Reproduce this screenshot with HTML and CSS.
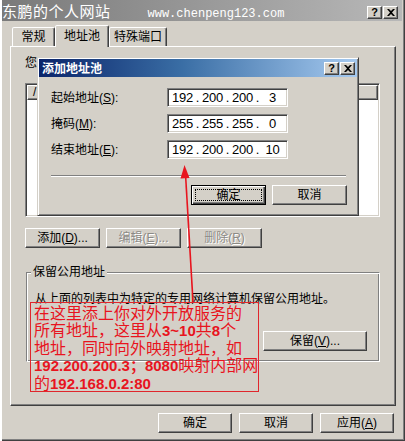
FILE: index.html
```html
<!DOCTYPE html>
<html>
<head>
<meta charset="utf-8">
<link rel="stylesheet" href="styles.css">
</head>
<body>
<div class="window">
  <div class="titlebar">
    <span class="tt-cn">东鹏的个人网站</span><span class="tt-url">www.chenpeng123.com</span>
    <div class="capbtns">
      <span class="capbtn q">?</span>
      <span class="capbtn"><svg width="8" height="7" viewBox="0 0 8 7"><path d="M0 0h2l2 2 2-2h2L5 3.5 8 7H6L4 5 2 7H0l3-3.5z" fill="#000"/></svg></span>
    </div>
  </div>

  <div class="tabs">
    <div class="tab t1">常规</div>
    <div class="tab sel">地址池</div>
    <div class="tab t3">特殊端口</div>
  </div>

  <div class="panel">
    <div class="lbl">您</div>
    <div class="list">
      <div class="lhead">
        <div class="hcell h1">/</div>
        <div class="hcell h2"></div>
        <div class="hcell h3"></div>
      </div>
    </div>
    <div class="btnrow">
      <div class="btn w75">添加(<u>D</u>)...</div>
      <div class="btn w75 dis">编辑(<u>E</u>)...</div>
      <div class="btn w75 dis">删除(<u>R</u>)</div>
    </div>
    <div class="group">
      <div class="gtitle">保留公用地址</div>
      <div class="gdesc">从上面的列表中为特定的专用网络计算机保留公用地址。</div>
      <div class="gbtns"><div class="btn w104">保留(<u>V</u>)...</div></div>
    </div>
  </div>

  <div class="footer">
    <div class="btn w74">确定</div>
    <div class="btn w74">取消</div>
    <div class="btn w74">应用(<u>A</u>)</div>
  </div>

  <div class="dialog">
    <div class="dtitle">
      <span class="dtext">添加地址池</span>
      <div class="dcap">
        <span class="capbtn q">?</span>
        <span class="capbtn"><svg width="8" height="7" viewBox="0 0 8 7"><path d="M0 0h2l2 2 2-2h2L5 3.5 8 7H6L4 5 2 7H0l3-3.5z" fill="#000"/></svg></span>
      </div>
    </div>
    <div class="dbody">
      <div class="frow">
        <span class="flabel">起始地址(<u>S</u>):</span>
        <div class="ipbox"><span class="oct">192</span><span class="dot">.</span><span class="oct">200</span><span class="dot">.</span><span class="oct">200</span><span class="dot">.</span><span class="oct">3</span></div>
      </div>
      <div class="frow">
        <span class="flabel">掩码(<u>M</u>):</span>
        <div class="ipbox"><span class="oct">255</span><span class="dot">.</span><span class="oct">255</span><span class="dot">.</span><span class="oct">255</span><span class="dot">.</span><span class="oct">0</span></div>
      </div>
      <div class="frow">
        <span class="flabel">结束地址(<u>E</u>):</span>
        <div class="ipbox"><span class="oct">192</span><span class="dot">.</span><span class="oct">200</span><span class="dot">.</span><span class="oct">200</span><span class="dot">.</span><span class="oct">10</span></div>
      </div>
      <div class="sep"></div>
      <div class="dbtns">
        <div class="btn w75 default"><span class="focus">确定</span></div>
        <div class="btn w75">取消</div>
      </div>
    </div>
  </div>

  <div class="note">在这里添上你对外开放服务的<br>所有地址，这里从<b>3~10</b>共<b>8</b>个<br>地址，同时向外映射地址，如<br><b>192.200.200.3；8080</b>映射内部网<br>的<b>192.168.0.2:80</b></div>

  <svg class="arrow" width="405" height="441" viewBox="0 0 405 441">
    <line x1="193" y1="302" x2="185.5" y2="174" stroke="#e8141e" stroke-width="1.6"/>
    <polygon points="184.5,165 189.5,178 180.5,178.5" fill="#e8141e"/>
  </svg>
</div>
</body>
</html>
```

FILE: styles.css
```css
* { box-sizing: border-box; margin: 0; padding: 0; }

html, body {
  width: 405px;
  height: 441px;
  overflow: hidden;
  background: #d4d0c8;
}

body {
  font-family: "Liberation Sans", "Noto Sans CJK SC", sans-serif;
  font-size: 12px;
  color: #000;
}

u { text-decoration: underline; text-underline-offset: 1px; }

.window {
  position: relative;
  width: 405px;
  height: 441px;
  background: #d4d0c8;
  box-shadow: inset 2px 0 #fff, inset -1px -1px #404040, inset -2px -2px #808080;
}

/* outer title bar (inactive) */
.titlebar {
  height: 21px;
  margin: 0 3px 0 2px;
  background: linear-gradient(to right, #7a7a7a, #8c8c8c 30%, #b8b8b8);
  position: relative;
  color: #fff;
  white-space: nowrap;
  overflow: hidden;
  line-height: 21px;
}
.tt-cn {
  font-family: "Noto Sans CJK SC", sans-serif;
  font-size: 15px;
  letter-spacing: 0.5px;
}
.tt-url {
  font-family: "Liberation Mono", monospace;
  font-size: 12px;
  margin-left: 37px;
}
.capbtns {
  position: absolute;
  right: 4px;
  top: 6px;
  display: flex;
}
.capbtn {
  width: 15px;
  height: 13px;
  background: #d4d0c8;
  border: 1px solid;
  border-color: #fff #404040 #404040 #fff;
  box-shadow: inset -1px -1px #808080;
  display: flex;
  align-items: center;
  justify-content: center;
  color: #000;
  font-weight: bold;
  font-size: 11px;
  line-height: 11px;
}
.capbtn.q { margin-right: 1px; }

/* tabs */
.tabs {
  display: flex;
  align-items: flex-end;
  height: 25px;
  padding-left: 12px;
  position: relative;
  z-index: 1;
}
.tab {
  height: 19px;
  border: 1px solid;
  border-bottom: none;
  border-color: #fff #404040 transparent #fff;
  border-radius: 2px 2px 0 0;
  box-shadow: inset -1px 0 #808080;
  text-align: center;
  line-height: 18px;
  font-size: 12px;
  background: #d4d0c8;
}
.t1 { width: 43px; }
.sel { width: 54px; height: 22px; margin-bottom: -1px; line-height: 20px; }
.t3 { width: 58px; }

/* tab panel */
.panel {
  margin-left: 10px;
  width: 386px;
  height: 360px;
  border: 1px solid;
  border-color: #fff #404040 #404040 #fff;
  box-shadow: inset -1px -1px #808080;
  padding-left: 14px;
}
.lbl {
  margin-top: 9px;
  height: 14px;
  line-height: 14px;
  white-space: nowrap;
}
.list {
  margin-top: 13px;
  width: 355px;
  height: 134px;
  background: #fff;
  border: 1px solid;
  border-color: #808080 #fff #fff #808080;
  box-shadow: inset 1px 1px #404040, inset -1px -1px #d4d0c8;
  padding: 1px;
}
.lhead {
  display: flex;
  height: 15px;
}
.hcell {
  background: #d4d0c8;
  border: 1px solid;
  border-color: #fff #404040 #404040 #fff;
  box-shadow: inset -1px -1px #808080;
  line-height: 12px;
  padding-left: 5px;
  font-size: 12px;
  overflow: hidden;
}
.h1 { width: 110px; }
.h2 { width: 110px; }
.h3 { flex: 1; }

.btnrow {
  margin-top: 11px;
  display: flex;
  gap: 6px;
}

.btn {
  height: 20px;
  background: #d4d0c8;
  border: 1px solid;
  border-color: #fff #404040 #404040 #fff;
  box-shadow: inset -1px -1px #808080;
  display: flex;
  align-items: center;
  justify-content: center;
  white-space: nowrap;
  font-size: 12px;
  line-height: 14px;
}
.w74 { width: 74px; }
.w75 { width: 75px; }
.w104 { width: 104px; }
.dis { color: #8c8a85; text-shadow: 1px 1px 0 #fff; }

.group {
  margin-top: 24px;
  margin-left: 1px;
  width: 354px;
  height: 90px;
  border: 1px solid;
  border-color: #808080 #fff #fff #808080;
  box-shadow: inset 1px 1px #fff, inset -1px -1px #808080;
}
.gtitle {
  display: inline-block;
  margin-top: -8px;
  margin-left: 4px;
  padding: 0 2px;
  background: #d4d0c8;
  line-height: 14px;
  vertical-align: top;
}
.gdesc {
  margin-top: 5px;
  padding-left: 8px;
  line-height: 14px;
  white-space: nowrap;
}
.gbtns {
  margin-top: 25px;
  display: flex;
  justify-content: flex-end;
  padding-right: 12px;
}

.footer {
  margin-top: 7px;
  display: flex;
  justify-content: flex-end;
  gap: 7px;
  padding-right: 11px;
}

/* overlaid dialog */
.dialog {
  position: absolute;
  left: 37px;
  top: 57px;
  width: 322px;
  height: 159px;
  background: #d4d0c8;
  border: 1px solid;
  border-color: #d4d0c8 #404040 #404040 #d4d0c8;
  box-shadow: inset 1px 1px #fff, inset -1px -1px #808080;
  padding: 1px;
  z-index: 5;
}
.dtitle {
  height: 18px;
  background: linear-gradient(to right, #0a246a, #3a6ea5 45%, #a6caf0);
  display: flex;
  align-items: center;
  justify-content: space-between;
  padding: 0 2px 0 3px;
}
.dtext {
  color: #fff;
  font-weight: bold;
  font-family: "Noto Sans CJK SC", sans-serif;
  font-size: 12px;
  line-height: 18px;
}
.dcap { display: flex; }
.dbody { padding-left: 12px; }
.frow {
  display: flex;
  align-items: center;
  height: 19px;
  margin-top: 7px;
}
.frow:first-child { margin-top: 11px; }
.flabel {
  width: 116px;
  font-size: 12px;
  line-height: 14px;
}
.ipbox {
  width: 121px;
  height: 19px;
  background: #fff;
  border: 1px solid;
  border-color: #808080 #fff #fff #808080;
  box-shadow: inset 1px 1px #404040, inset -1px -1px #d4d0c8;
  display: flex;
  align-items: center;
  padding-left: 4px;
  font-family: "Liberation Sans", sans-serif;
  font-size: 13px;
  letter-spacing: -0.3px;
  line-height: 15px;
}
.oct { flex: 0 0 21px; text-align: center; }
.dot { flex: 0 0 9px; text-align: center; }
.sep {
  margin-top: 16px;
  width: 295px;
  height: 2px;
  border-top: 1px solid #808080;
  border-bottom: 1px solid #fff;
}
.dbtns {
  margin-top: 8px;
  display: flex;
  justify-content: flex-end;
  gap: 6px;
  padding-right: 10px;
}
.default {
  border: 1px solid #000;
  box-shadow: inset 1px 1px #fff, inset -1px -1px #404040, inset -2px -2px #808080;
  padding: 3px;
}
.focus {
  flex: 1;
  align-self: stretch;
  border: 1px dotted #000;
  display: flex;
  align-items: center;
  justify-content: center;
}

/* red annotation */
.note {
  position: absolute;
  left: 30px;
  top: 302px;
  width: 229px;
  height: 90px;
  border: 1px solid #e0262c;
  color: #e8141e;
  font-family: "Noto Sans CJK SC", sans-serif;
  font-size: 16px;
  line-height: 17px;
  padding: 1px 0 0 3px;
  white-space: nowrap;
  z-index: 6;
}
.note b {
  font-family: "Liberation Sans", "Noto Sans CJK SC", sans-serif;
  font-weight: bold;
  font-size: 15px;
}

.arrow {
  position: absolute;
  left: 0;
  top: 0;
  z-index: 7;
  pointer-events: none;
}
```
